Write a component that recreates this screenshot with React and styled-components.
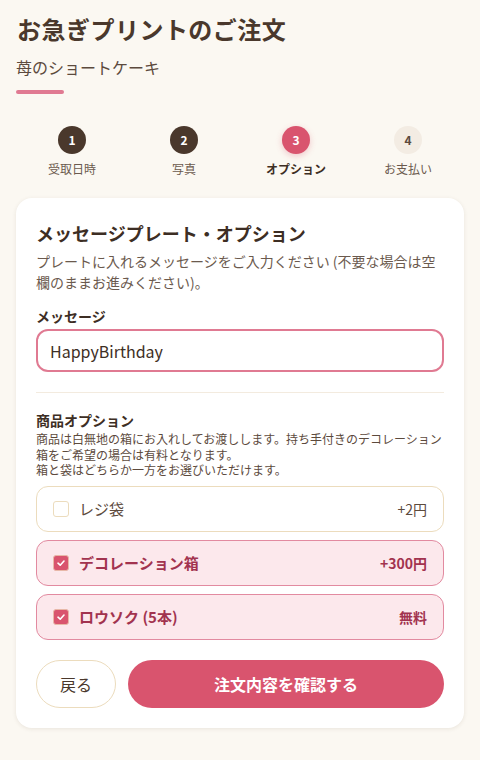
import React from "react";
import styled, { createGlobalStyle } from "styled-components";

const GlobalStyle = createGlobalStyle`
  html {
    overflow-y: scroll;
    overflow-x: hidden;
  }
  body {
    margin: 0;
    background: #fbf8f2;
    color: #4a382c;
    font-family: "Noto Sans CJK JP", "Noto Sans", sans-serif;
  }
`;

const Page = styled.div`
  width: 100vw;
  box-sizing: border-box;
  padding: 12px 16px 32px;
`;

const Title = styled.h1`
  margin: 0 0 0 1px;
  font-size: 24px;
  line-height: 1.4;
  font-weight: 700;
  color: #4a382c;
  letter-spacing: 0.02em;
`;

const Subtitle = styled.p`
  margin: 9px 0 0;
  font-size: 16px;
  line-height: 1.5;
  color: #5c4a3d;
`;

const Accent = styled.div`
  width: 48px;
  height: 4px;
  border-radius: 2px;
  background: #e07a92;
  margin-top: 11px;
`;

const Steps = styled.ol`
  list-style: none;
  margin: 32px 0 0;
  padding: 0;
  display: grid;
  grid-template-columns: repeat(4, 1fr);
`;

const Step = styled.li`
  display: flex;
  flex-direction: column;
  align-items: center;
  gap: 6px;
`;

const StepDot = styled.span`
  width: 28px;
  height: 28px;
  border-radius: 50%;
  display: flex;
  align-items: center;
  justify-content: center;
  font-size: 12px;
  font-weight: 700;
  background: ${(p) =>
    p.$state === "done" ? "#4a382c" : p.$state === "active" ? "#d9546e" : "#f3ece3"};
  color: ${(p) => (p.$state === "todo" ? "#5c4a3d" : "#ffffff")};
  box-shadow: ${(p) => (p.$state === "active" ? "0 2px 6px rgba(217,84,110,0.3)" : "none")};
`;

const StepLabel = styled.span`
  font-size: 12px;
  line-height: 18px;
  color: ${(p) => (p.$active ? "#3d2e24" : "#6b5a4e")};
  font-weight: ${(p) => (p.$active ? 700 : 400)};
`;

const Card = styled.section`
  margin-top: 20px;
  background: #ffffff;
  border-radius: 16px;
  padding: 23px 20px 20px;
  box-shadow: 0 1px 4px rgba(74, 56, 44, 0.1);
`;

const CardTitle = styled.h2`
  margin: 0;
  font-size: 18px;
  line-height: 1.4;
  font-weight: 700;
  color: #3d2e24;
`;

const Lead = styled.p`
  margin: 5px 0 0;
  font-size: 14px;
  line-height: 1.55;
  color: #6b5a4e;
`;

const FieldLabel = styled.label`
  display: block;
  margin: 12px 0 2px;
  font-size: 14px;
  line-height: 1.5;
  font-weight: 700;
  color: #3d2e24;
`;

const TextInput = styled.input`
  display: block;
  width: 100%;
  box-sizing: border-box;
  height: 43px;
  padding: 0 12px;
  border: 2px solid #e07a92;
  border-radius: 12px;
  font-family: inherit;
  font-size: 16px;
  color: #3d2e24;
  background: #fff;
  outline: none;
`;

const Divider = styled.hr`
  border: none;
  border-top: 1px solid #f3ebdf;
  margin: 20px 0 17px;
`;

const SectionTitle = styled.h3`
  margin: 0;
  font-size: 14px;
  line-height: 1.5;
  font-weight: 700;
  color: #3d2e24;
`;

const Note = styled.p`
  margin: 0;
  font-size: 12px;
  line-height: 1.3;
  color: #5c4a3d;
`;

const OptionList = styled.div`
  margin-top: 8px;
  display: flex;
  flex-direction: column;
  gap: 8px;
`;

const OptionRow = styled.label`
  display: flex;
  align-items: center;
  gap: 10px;
  height: 46px;
  box-sizing: border-box;
  padding: 0 16px;
  border-radius: 12px;
  border: 1px solid ${(p) => (p.$checked ? "#e28aa0" : "#ecdcbd")};
  background: ${(p) => (p.$checked ? "#fce8ec" : "#ffffff")};
`;

const Box = styled.span`
  width: 16px;
  height: 16px;
  box-sizing: border-box;
  border-radius: 3px;
  display: flex;
  align-items: center;
  justify-content: center;
  border: 1px solid ${(p) => (p.$checked ? "#e8b8a8" : "#ecdcbd")};
  background: ${(p) => (p.$checked ? "#d9546e" : "#ffffff")};
`;

const OptionName = styled.span`
  flex: 1;
  font-size: 15px;
  font-weight: ${(p) => (p.$checked ? 700 : 400)};
  color: ${(p) => (p.$checked ? "#a2334f" : "#5c4a3d")};
`;

const Price = styled.span`
  font-size: 14px;
  font-weight: ${(p) => (p.$checked ? 700 : 400)};
  color: ${(p) => (p.$checked ? "#a2334f" : "#5c4a3d")};
`;

const Actions = styled.div`
  margin-top: 20px;
  display: flex;
  gap: 12px;
`;

const BackButton = styled.button`
  width: 80px;
  height: 48px;
  border-radius: 24px;
  border: 1px solid #ecdcbd;
  background: #ffffff;
  font-family: inherit;
  font-size: 16px;
  color: #4a382c;
`;

const PrimaryButton = styled.button`
  flex: 1;
  height: 48px;
  border-radius: 24px;
  border: none;
  background: #d9546e;
  color: #ffffff;
  font-family: inherit;
  font-size: 16px;
  font-weight: 700;
`;

const steps = [
  { n: 1, label: "受取日時", state: "done" },
  { n: 2, label: "写真", state: "done" },
  { n: 3, label: "オプション", state: "active" },
  { n: 4, label: "お支払い", state: "todo" },
];

const options = [
  { name: "レジ袋", price: "+2円", checked: false },
  { name: "デコレーション箱", price: "+300円", checked: true },
  { name: "ロウソク (5本)", price: "無料", checked: true },
];

const Check = () => (
  <svg width="10" height="10" viewBox="0 0 10 10">
    <polyline points="2,5.2 4.2,7.2 8,3" fill="none" stroke="#fff" strokeWidth="1.6" strokeLinecap="round" strokeLinejoin="round" />
  </svg>
);

export default function App() {
  return (
    <>
      <GlobalStyle />
      <Page>
        <Title>お急ぎプリントのご注文</Title>
        <Subtitle>苺のショートケーキ</Subtitle>
        <Accent />

        <Steps>
          {steps.map((s) => (
            <Step key={s.n}>
              <StepDot $state={s.state}>{s.n}</StepDot>
              <StepLabel $active={s.state === "active"}>{s.label}</StepLabel>
            </Step>
          ))}
        </Steps>

        <Card>
          <CardTitle>メッセージプレート・オプション</CardTitle>
          <Lead>
            プレートに入れるメッセージをご入力ください (不要な場合は空欄のままお進みください)。
          </Lead>

          <FieldLabel htmlFor="msg">メッセージ</FieldLabel>
          <TextInput id="msg" defaultValue="HappyBirthday" />

          <Divider />

          <SectionTitle>商品オプション</SectionTitle>
          <Note>
            商品は白無地の箱にお入れしてお渡しします。持ち手付きのデコレーション箱をご希望の場合は有料となります。
          </Note>
          <Note>箱と袋はどちらか一方をお選びいただけます。</Note>

          <OptionList>
            {options.map((o) => (
              <OptionRow key={o.name} $checked={o.checked}>
                <Box $checked={o.checked}>{o.checked && <Check />}</Box>
                <OptionName $checked={o.checked}>{o.name}</OptionName>
                <Price $checked={o.checked}>{o.price}</Price>
              </OptionRow>
            ))}
          </OptionList>

          <Actions>
            <BackButton>戻る</BackButton>
            <PrimaryButton>注文内容を確認する</PrimaryButton>
          </Actions>
        </Card>
      </Page>
    </>
  );
}
